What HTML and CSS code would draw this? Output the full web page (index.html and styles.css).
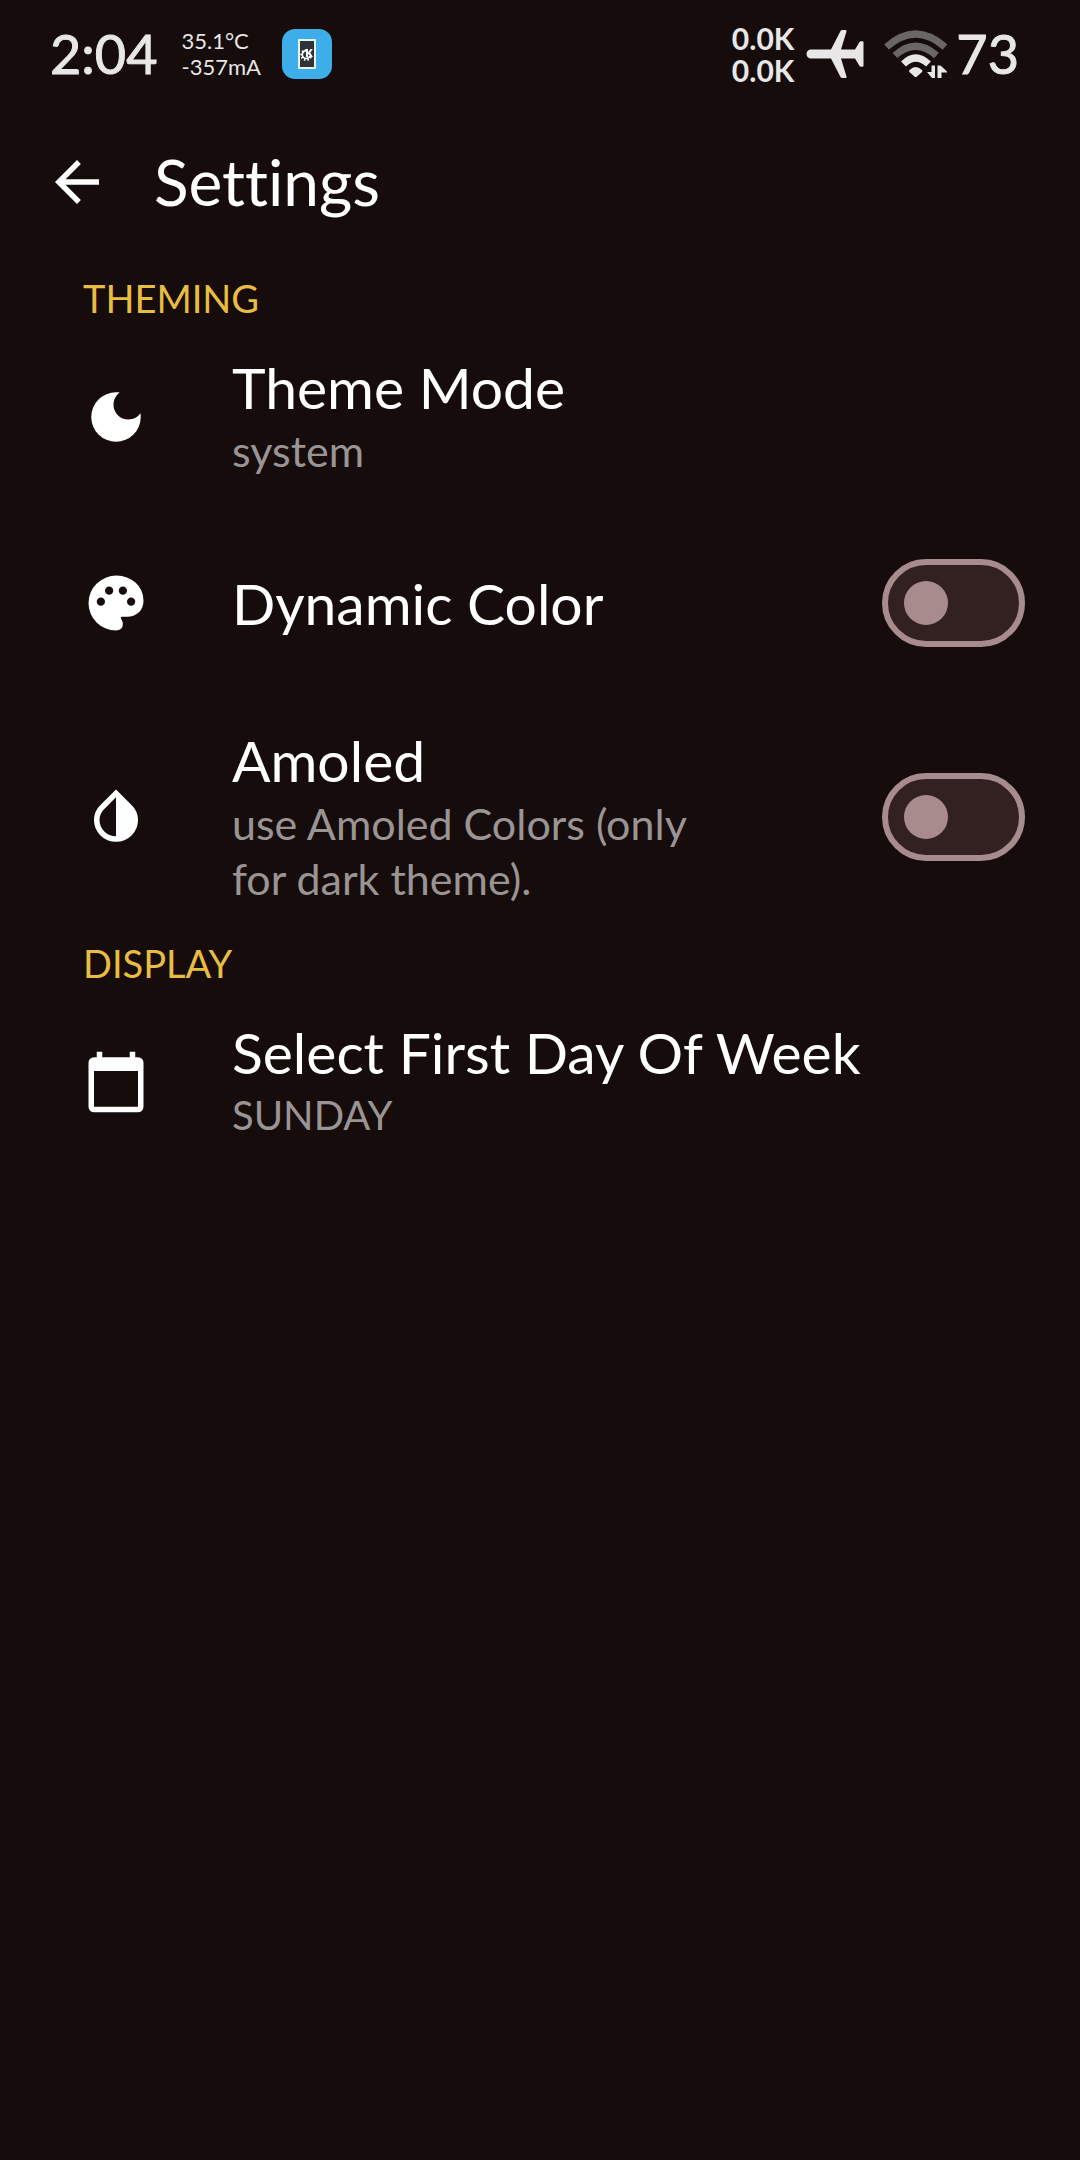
FILE: index.html
```html
<!DOCTYPE html>
<html lang="en">
<head>
  <meta charset="utf-8">
  <meta name="viewport" content="width=device-width, initial-scale=1">
  <title>Settings</title>
  <link rel="stylesheet" href="styles.css">
</head>
<body>
  <div class="status-bar">
    <div class="status-group">
      <span class="clock">2:04</span>
      <div class="sensor"><span>35.1°C</span><span>-357mA</span></div>
      <svg class="app-badge" viewBox="0 0 50 50" aria-hidden="true">
        <rect width="50" height="50" rx="13" fill="#3daee9"/>
        <rect x="16" y="10" width="18" height="30" rx="1" fill="#e6f4fb"/>
        <rect x="18" y="12" width="14" height="26" fill="#2f3336"/>
        <path d="M24.500 21.500a4 4 0 1 0 3.500 5.500" fill="none" stroke="#fff" stroke-width="1.500"/>
        <path d="M24.500 21.500a4.500 4.500 0 1 0 4 6" fill="none" stroke="#fff" stroke-width="3" stroke-dasharray="1.300 1.700"/>
        <path d="M24 20h2v3.500l2.500-3.500h2.300l-2.600 3.700 2.800 4.300h-2.300L26.500 25l-.5.700V28h-2z" fill="#fff"/>
      </svg>
    </div>
    <div class="status-group">
      <div class="net"><span>0.0K</span><span>0.0K</span></div>
      <svg class="plane" viewBox="0 0 58 50" aria-hidden="true">
        <path d="M5 20.500h20L34.500 2q.7-1 2-1h3q1.500 0 1 1.500L35 20.500h14L53.500 13q.6-.8 1.500-.8h1.500q1 0 1 1v23.600q0 1-1 1H55q-.9 0-1.500-.8L49 29.500H35l5.500 18q.5 1.500-1 1.500h-3q-1.300 0-2-1L25 29.500H5a4.500 4.500 0 0 1 0-9z" fill="#e8e6e6"/>
      </svg>
      <svg class="wifi" viewBox="0 0 64 48" aria-hidden="true">
        <g fill="none" stroke-width="7">
          <path d="M2.500 17Q31.500-9 61 17" stroke="#6b6666"/>
          <path d="M11 25.500Q31.500 7 52.500 25.500" stroke="#6b6666"/>
          <path d="M19.500 34Q31.500 22 44.500 34" stroke="#e8e6e6"/>
        </g>
        <path d="M25.500 40q6-6 12.500 0 .8 1 0 2l-5 4.500q-1.300 1-2.600 0l-5-4.500q-.8-1 .1-2zM43 42h4.500v-6.500h3.500V48h-3zM53.500 48V35.500h3l6.500 6v1h-5.500V48z" fill="#e8e6e6"/>
      </svg>
      <span class="battery">73</span>
    </div>
  </div>

  <header class="app-bar">
    <button class="back" type="button" aria-label="Back">
      <svg class="icon" viewBox="0 0 24 24" aria-hidden="true"><path d="M20 11H7.830l5.590-5.590L12 4l-8 8 8 8 1.410-1.410L7.830 13H20z"/></svg>
    </button>
    <h1 class="page-title">Settings</h1>
  </header>

  <main class="settings">
    <section>
      <h2 class="section-label">THEMING</h2>
      <button class="row" type="button">
        <svg class="icon" viewBox="0 0 24 24" aria-hidden="true"><path d="M12 3a9 9 0 1 0 9 9c0-.460-.040-.920-.100-1.360a5.390 5.390 0 0 1-4.400 2.260 5.400 5.400 0 0 1-5.400-5.400c0-1.810.890-3.420 2.260-4.400C12.920 3.040 12.460 3 12 3z"/></svg>
        <span class="text"><span class="title">Theme Mode</span><span class="summary">system</span></span>
      </button>
      <label class="row">
        <svg class="icon" viewBox="0 0 24 24" aria-hidden="true"><path fill-rule="evenodd" d="M12 22q-2.050 0-3.875-.788t-3.187-2.150-2.150-3.187T2 12q0-2.075.813-3.900t2.200-3.175T8.250 2.788 12.200 2q2 0 3.775.688t3.113 1.900 2.125 2.875T22 11.050q0 2.875-1.750 4.413T16 17h-1.850q-.225 0-.312.125t-.088.275q0 .300.375.863t.375 1.287q0 1.250-.687 1.850T12 22zM6.500 10a1.500 1.500 0 1 0 0 3 1.500 1.500 0 0 0 0-3zM9.500 6a1.500 1.500 0 1 0 0 3 1.500 1.500 0 0 0 0-3zM14.500 6a1.500 1.500 0 1 0 0 3 1.500 1.500 0 0 0 0-3zM17.500 10a1.500 1.500 0 1 0 0 3 1.500 1.500 0 0 0 0-3z"/></svg>
        <span class="text"><span class="title">Dynamic Color</span></span>
        <input class="switch" type="checkbox" role="switch">
      </label>
      <label class="row">
        <svg class="icon" viewBox="0 0 24 24" aria-hidden="true"><path fill-rule="evenodd" d="M12 21q-3.325 0-5.663-2.300T4 13.100q0-1.600.6-2.988T6.350 7.650L12 2l5.650 5.650q1.150 1.075 1.750 2.463T20 13.100q0 3.300-2.337 5.600T12 21zM12 19V4.800L7.750 9.050q-.875.825-1.312 1.863T6 13.100q0 2.425 1.750 4.163T12 19z"/></svg>
        <span class="text"><span class="title">Amoled</span><span class="summary">use Amoled Colors (only for dark theme).</span></span>
        <input class="switch" type="checkbox" role="switch">
      </label>
    </section>
    <section>
      <h2 class="section-label">DISPLAY</h2>
      <button class="row" type="button">
        <svg class="icon" viewBox="0 0 24 24" aria-hidden="true"><path fill-rule="evenodd" d="M20 3h-1V1h-2v2H7V1H5v2H4a2 2 0 0 0-2 2v16a2 2 0 0 0 2 2h16a2 2 0 0 0 2-2V5a2 2 0 0 0-2-2zM20 21H4V8h16z"/></svg>
        <span class="text"><span class="title">Select First Day Of Week</span><span class="summary summary-caps">SUNDAY</span></span>
      </button>
    </section>
  </main>
</body>
</html>
```
FILE: styles.css
```css
* {
  box-sizing: border-box;
}

body {
  margin: 0;
  min-height: 100vh;
  background: #150c0b;
  color: #fff;
  font-family: Lato, "Liberation Sans", sans-serif;
  font-variant-ligatures: none;
}

button {
  border: 0;
  padding: 0;
  background: none;
  color: inherit;
  font: inherit;
  text-align: left;
  cursor: pointer;
}

.icon {
  display: block;
  flex: none;
  width: 66px;
  height: 66px;
  fill: currentColor;
}

/* Status bar */
.status-bar {
  display: flex;
  align-items: center;
  justify-content: space-between;
  height: 108px;
  padding: 0 61px 0 50px;
  color: #e8e6e6;
}

.status-group {
  display: flex;
  align-items: center;
}

.clock,
.battery {
  font-size: 54px;
  line-height: 64px;
  -webkit-text-stroke: 1px currentColor;
}

.sensor,
.net {
  display: flex;
  flex-direction: column;
}

.sensor {
  margin: 0 21px 0 24px;
  font-size: 22px;
  line-height: 26px;
}

.app-badge {
  width: 50px;
  height: 50px;
}

.net {
  margin-right: 12px;
  font-size: 30px;
  font-weight: 700;
  line-height: 32px;
}

.plane {
  width: 58px;
  height: 50px;
  margin-right: 20px;
}

.wifi {
  width: 64px;
  height: 48px;
  margin-right: 8px;
}

/* App bar */
.app-bar {
  display: flex;
  align-items: center;
  gap: 44px;
  height: 148px;
  padding: 0 44px;
}

.page-title {
  margin: 0;
  font-size: 64px;
  font-weight: 400;
  line-height: 76px;
}

/* Preference list */
.settings {
  padding-top: 24px;
}

.section-label {
  margin: 0;
  padding: 0 83px;
  color: #e8bd41;
  font-size: 38px;
  font-weight: 400;
  line-height: 36px;
}

.row {
  display: flex;
  align-items: center;
  width: 100%;
  min-height: 172px;
  padding: 39px 55px 39px 83px;
  cursor: pointer;
}

.text {
  display: flex;
  flex: 1;
  flex-direction: column;
  gap: 4px;
  margin-left: 83px;
}

.title {
  font-size: 57px;
  line-height: 64px;
}

.summary {
  color: #9a9594;
  font-size: 43px;
  line-height: 55px;
}

.summary-caps {
  font-size: 40px;
}

.switch {
  flex: none;
  display: flex;
  align-items: center;
  appearance: none;
  width: 143px;
  height: 88px;
  margin: 0 0 0 150px;
  padding: 0 16px;
  border: 6px solid #a88c8d;
  border-radius: 44px;
  background: #332121;
  cursor: pointer;
}

.switch::before {
  content: "";
  width: 44px;
  height: 44px;
  border-radius: 50%;
  background: #a88c8d;
}

.switch:checked {
  justify-content: flex-end;
}
```
